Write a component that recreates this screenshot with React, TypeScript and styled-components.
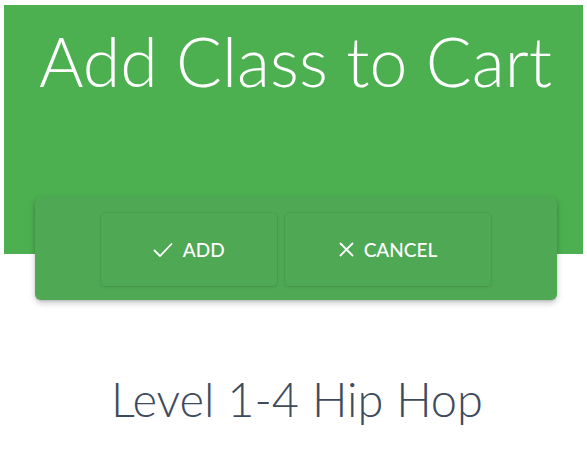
import styled, { createGlobalStyle } from "styled-components";

const GlobalStyle = createGlobalStyle`
  html, body {
    margin: 0;
    padding: 0;
    background: #ffffff;
    font-family: Lato, "Open Sans", sans-serif;
  }
`;

export const Page = styled.div`
  padding: 5px 4px 0;
`;

export const Header = styled.header`
  background: #4caf50;
  height: 249px;
  box-sizing: border-box;
  padding-top: 15px;
  text-align: center;
`;

export const Title = styled.h1`
  margin: 0;
  color: #ffffff;
  font-family: Lato, sans-serif;
  font-weight: 300;
  font-size: 68px;
  line-height: 82px;
  padding-left: 4px;
`;

export const Card = styled.div`
  margin: -57px 0 0 31px;
  width: 522px;
  height: 103px;
  box-sizing: border-box;
  background: #4fa854;
  border-radius: 6px;
  box-shadow: 0 3px 6px rgba(0, 0, 0, 0.22), 0 1px 2px rgba(0, 0, 0, 0.12);
  display: flex;
  align-items: center;
  justify-content: center;
  gap: 8px;
`;

export const Button = styled.button<{ $pad?: number }>`
  height: 73px;
  padding: 0 ${(p) => p.$pad ?? 52}px;
  margin-top: 2px;
  background: transparent;
  border: none;
  border-radius: 4px;
  box-shadow: 0 1px 3px rgba(0, 0, 0, 0.1), 0 0 0 1px rgba(0, 0, 0, 0.03);
  color: #ffffff;
  font-family: Lato, sans-serif;
  font-weight: 500;
  font-size: 19px;
  display: flex;
  align-items: center;
  gap: 10px;
  cursor: pointer;
`;

export const ClassName = styled.h2`
  margin: 71px 0 0;
  text-align: center;
  color: #3e4b5c;
  font-family: Lato, sans-serif;
  font-weight: 300;
  font-size: 47px;
  line-height: 56px;
  padding-left: 7px;
`;

const CheckIcon = () => (
  <svg width="20" height="15" viewBox="0 0 20 15" fill="none">
    <path d="M1 8 L7 14 L19 1.5" stroke="#fff" strokeWidth="1.8" />
  </svg>
);

const CloseIcon = () => (
  <svg width="15" height="15" viewBox="0 0 15 15" fill="none">
    <path d="M1 1 L14 14 M14 1 L1 14" stroke="#fff" strokeWidth="1.8" />
  </svg>
);

const App = () => {
  return (
    <Page>
      <GlobalStyle />
      <Header>
        <Title>Add Class to Cart</Title>
      </Header>
      <Card>
        <Button type="button">
          <CheckIcon />
          ADD
        </Button>
        <Button type="button" $pad={54}>
          <CloseIcon />
          CANCEL
        </Button>
      </Card>
      <ClassName>Level 1-4 Hip Hop</ClassName>
    </Page>
  );
};

export default App;
